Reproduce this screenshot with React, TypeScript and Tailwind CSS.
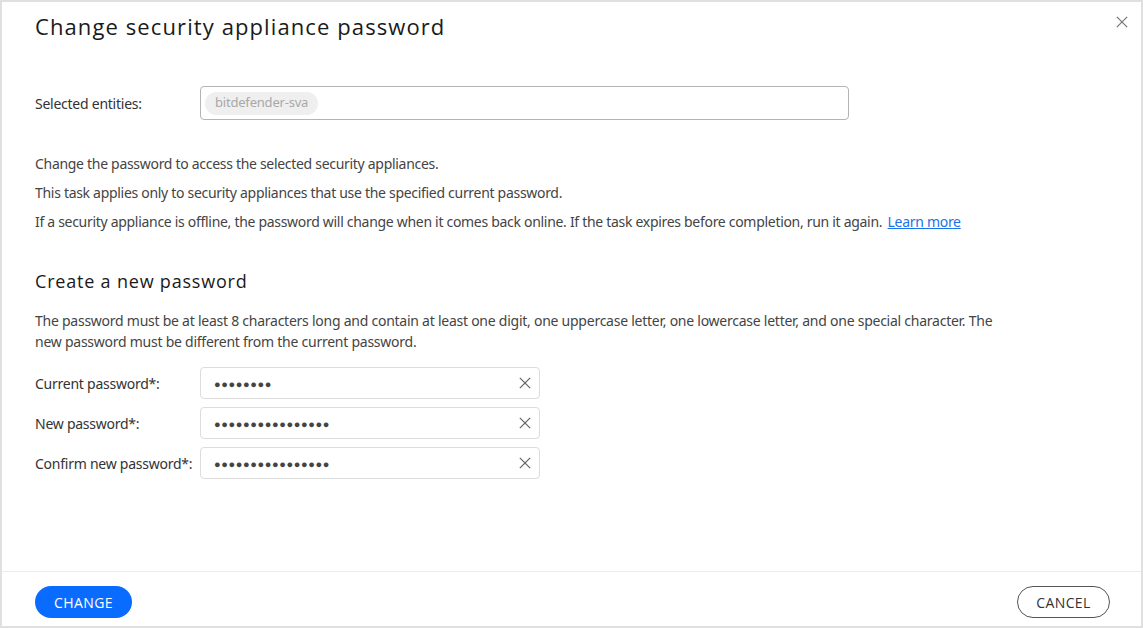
import React from "react";

const body = { fontFamily: '"Noto Sans", "Open Sans", sans-serif' };
const heading = { fontFamily: '"Open Sans", Lato, sans-serif' };

const CloseIcon = ({ size = 14, className = "" }: { size?: number; className?: string }) => (
  <svg width={size} height={size} viewBox="0 0 14 14" className={className}>
    <path d="M1 1 L13 13 M13 1 L1 13" stroke="currentColor" strokeWidth="1.5" fill="none" />
  </svg>
);

type PasswordRowProps = {
  label: string;
  length: number;
};

const PasswordRow = ({ label, length }: PasswordRowProps) => (
  <div className="flex items-center">
    <div className="w-[165px] text-[14px] text-[#333] tracking-[-0.25px]">{label}</div>
    <div className="w-[340px] h-[32px] border border-[#dcdcdc] rounded-[4px] flex items-center justify-between pl-[13px] pr-[8px]">
      <span className="text-[#444] text-[11px] tracking-[0.6px] leading-none">{"●".repeat(length)}</span>
      <CloseIcon size={12} className="text-[#666]" />
    </div>
  </div>
);

export default function App() {
  return (
    <div className="w-[1143px] h-[628px] border-2 border-[#e0e0e0] bg-white flex flex-col" style={body}>
      <div className="flex-1 px-[33px]">
        <div className="flex items-start justify-between pt-[8px]">
          <h1 className="text-[22px] leading-[33px] text-[#1a1a1a] tracking-[1.1px]" style={heading}>
            Change security appliance password
          </h1>
          <button className="mt-[6px] mr-[-20px] text-[#777] flex">
            <CloseIcon size={12} />
          </button>
        </div>

        <div className="flex items-center mt-[43px]">
          <div className="w-[165px] text-[14px] text-[#333] tracking-[-0.25px]">Selected entities:</div>
          <div className="w-[649px] h-[34px] border border-[#b4b4b4] rounded-[4px] flex items-center px-[4px]">
            <span className="bg-[#efefef] rounded-full px-[10px] h-[23px] flex items-center text-[13px] text-[#a8a8a8] tracking-[-0.2px]">
              bitdefender-sva
            </span>
          </div>
        </div>

        <div className="mt-[33px] flex flex-col gap-[8px] text-[14px] text-[#444] leading-[21px] tracking-[-0.3px]">
          <p>Change the password to access the selected security appliances.</p>
          <p>This task applies only to security appliances that use the specified current password.</p>
          <p>
            If a security appliance is offline, the password will change when it comes back online. If the task
            expires before completion, run it again.{" "}
            <a href="#" className="text-[#1a73e8] underline ml-[2px]">
              Learn more
            </a>
          </p>
        </div>

        <h2 className="mt-[36px] text-[18px] text-[#1a1a1a] tracking-[0.8px]" style={heading}>
          Create a new password
        </h2>

        <p className="mt-[15px] w-[962px] text-[14px] text-[#444] leading-[21px] tracking-[-0.25px]">
          The password must be at least 8 characters long and contain at least one digit, one uppercase letter, one
          lowercase letter, and one special character. The new password must be different from the current password.
        </p>

        <div className="mt-[15px] flex flex-col gap-[8px]">
          <PasswordRow label="Current password*:" length={8} />
          <PasswordRow label="New password*:" length={16} />
          <PasswordRow label="Confirm new password*:" length={16} />
        </div>
      </div>

      <div className="border-t border-[#ececec] h-[55px] px-[33px] pt-[14px] flex items-start justify-between">
        <button
          className="bg-[#0a6cff] text-white rounded-full w-[97px] h-[32px] text-[14px] tracking-[0.4px]"
          style={heading}
        >
          CHANGE
        </button>
        <button
          className="border border-[#555] text-[#333] rounded-full w-[93px] h-[32px] text-[14px] tracking-[0.4px] mr-[-2px]"
          style={heading}
        >
          CANCEL
        </button>
      </div>
    </div>
  );
}
